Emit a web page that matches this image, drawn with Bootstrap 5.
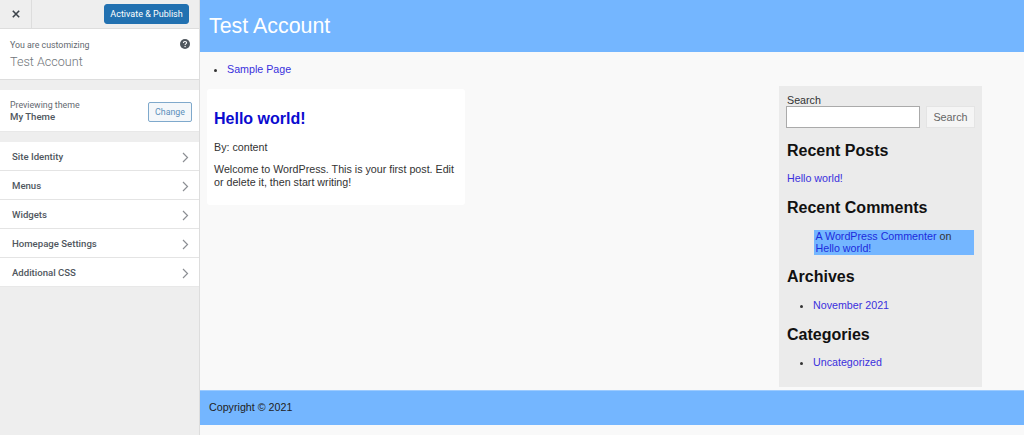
<!DOCTYPE html>
<html lang="en">
<head>
<meta charset="utf-8">
<title>Customize</title>
<link href="https://cdn.jsdelivr.net/npm/bootstrap@5.3.0/dist/css/bootstrap.min.css" rel="stylesheet">
<style>
html,body{height:100%;}
body{overflow:hidden;background:#f9f9f9;}
.shell{height:435px;}
.ctl{width:200px;flex:none;background:#eee;border-right:1px solid #ddd;font-family:"Roboto","Open Sans",sans-serif;color:#50575e;}
.ctl-top{height:29px;border-bottom:1px solid #ddd;}
.ctl-close{width:32px;border-right:1px solid #ddd;}
.ctl-pub{background:#2271b1;border:1px solid #2271b1;color:#fff;font-size:9px;line-height:18px;padding:0;width:85px;border-radius:3px;height:20px;margin:4px 10px 0 0;white-space:nowrap;}
.ctl-info{height:51px;background:#fff;border-bottom:1px solid #ddd;padding:10px 9px 0 10px;}
.ctl-small{font-size:8.8px;line-height:12px;color:#646970;}
.ctl-title{font-size:12.6px;line-height:20px;color:#70757a;font-weight:300;margin-top:1px;}
.ctl-theme{height:42px;margin-top:10px;background:#fff;border-bottom:1px solid #e8e8e8;padding:9px 7px 0 10px;}
.ctl-name{font-size:9.6px;line-height:12px;font-weight:500;color:#50575e;}
.ctl-change{height:20px;width:44px;margin-top:3px;padding:0;font-size:8.8px;line-height:18px;color:#5b8fba;background:#f4f7fa;border:1px solid #7fa9cc;border-radius:2px;}
.ctl-list{margin-top:10px;background:#fff;border-bottom:1px solid #e8e8e8;}
.ctl-row{height:29px;padding:2px 10px 0 12px;border-bottom:1px solid #e4e4e4;font-size:9.6px;font-weight:500;color:#50575e;}
.ctl-row:last-child{border-bottom:0;height:28px;}
.site{font-family:"Liberation Sans",Arial,sans-serif;font-size:10.7px;line-height:12.6px;color:#333;min-width:0;background:#f9f9f9;}
.site a{color:#3a30dd;text-decoration:none;}
.site-head{height:52px;background:#74b6ff;color:#fff;padding-left:9px;font-size:21.4px;}
.site-nav{margin:0;padding:11px 0 0 27px;height:34px;}
.site-main{height:304px;}
.post{width:258px;height:116px;margin:3px 0 0 7px;background:#fff;padding:0 7px;border-radius:3px;}
.post-title{font-size:16px;line-height:20px;font-weight:700;margin:20px 0 12px;}
.post-title a{color:#0b0bd0;}
.post p{margin:0 0 9.8px;}
.side{width:203px;height:301px;margin-right:42px;background:#ebebeb;padding:8px 8px 0 8px;}
.side-label{line-height:12px;display:block;color:#333;}
.side-input{width:134px;height:22px;margin-left:-1px;border:1px solid #aaa;background:#fff;}
.side-btn{width:49px;height:22px;padding:0;margin-right:-1px;border:1px solid #e4e4e4;background:#f5f5f5;color:#666;font-size:10.8px;}
.side-h{font-size:16px;line-height:20px;font-weight:700;color:#111;margin:13px 0 11px;}
.side-h-c{margin-bottom:12px;}
.side-h-a{margin:12px 0 12px;}
.side-h-k{margin-top:14px;}
.side ul{margin:0;padding-left:26px;}
.c-box{background:#74b6ff;margin:0 0 0 26.5px;padding:0 2px;line-height:12px;height:25px;}
.c-box a{color:#1c2bdc;}
.site-foot{height:35px;background:#74b6ff;padding:0 0 2px 9px;color:#222;border-top:1px solid #9ccbff;}
.site-rest{height:10px;}
</style>
</head>
<body>
<div class="d-flex shell">
  <aside class="ctl">
    <div class="ctl-top d-flex justify-content-between">
      <div class="ctl-close d-flex align-items-center justify-content-center">
        <svg width="8" height="8" viewBox="0 0 8 8" aria-hidden="true"><path d="M.8.8l6.4 6.4M7.2.8L.8 7.2" stroke="#3c434a" stroke-width="1.6" fill="none"/></svg>
      </div>
      <button class="ctl-pub" type="button">Activate &amp; Publish</button>
    </div>
    <div class="ctl-info d-flex justify-content-between">
      <div>
        <div class="ctl-small">You are customizing</div>
        <div class="ctl-title">Test Account</div>
      </div>
      <svg width="10" height="10" viewBox="0 0 11 11" aria-hidden="true"><circle cx="5.5" cy="5.5" r="5.5" fill="#50575e"/><path d="M3.7 4.3c0-1 .8-1.6 1.8-1.6s1.8.6 1.8 1.5c0 1.2-1.7 1.2-1.7 2.3" stroke="#fff" stroke-width="1.2" fill="none"/><circle cx="5.6" cy="8.2" r=".8" fill="#fff"/></svg>
    </div>
    <div class="ctl-theme d-flex justify-content-between">
      <div>
        <div class="ctl-small">Previewing theme</div>
        <div class="ctl-name">My Theme</div>
      </div>
      <button class="ctl-change" type="button">Change</button>
    </div>
    <div class="ctl-list">
      <div class="ctl-row d-flex align-items-center justify-content-between"><span>Site Identity</span><svg width="7" height="11" viewBox="0 0 7 11" aria-hidden="true"><path d="M1 1l4.5 4.5L1 10" stroke="#8c8f94" stroke-width="1.2" fill="none"/></svg></div>
      <div class="ctl-row d-flex align-items-center justify-content-between"><span>Menus</span><svg width="7" height="11" viewBox="0 0 7 11" aria-hidden="true"><path d="M1 1l4.5 4.5L1 10" stroke="#8c8f94" stroke-width="1.2" fill="none"/></svg></div>
      <div class="ctl-row d-flex align-items-center justify-content-between"><span>Widgets</span><svg width="7" height="11" viewBox="0 0 7 11" aria-hidden="true"><path d="M1 1l4.5 4.5L1 10" stroke="#8c8f94" stroke-width="1.2" fill="none"/></svg></div>
      <div class="ctl-row d-flex align-items-center justify-content-between"><span>Homepage Settings</span><svg width="7" height="11" viewBox="0 0 7 11" aria-hidden="true"><path d="M1 1l4.5 4.5L1 10" stroke="#8c8f94" stroke-width="1.2" fill="none"/></svg></div>
      <div class="ctl-row d-flex align-items-center justify-content-between"><span>Additional CSS</span><svg width="7" height="11" viewBox="0 0 7 11" aria-hidden="true"><path d="M1 1l4.5 4.5L1 10" stroke="#8c8f94" stroke-width="1.2" fill="none"/></svg></div>
    </div>
  </aside>
  <main class="site flex-grow-1">
    <div class="site-head d-flex align-items-center">Test Account</div>
    <ul class="site-nav"><li><a href="#">Sample Page</a></li></ul>
    <div class="site-main d-flex justify-content-between align-items-start">
      <article class="post">
        <h2 class="post-title"><a href="#">Hello world!</a></h2>
        <p>By: content</p>
        <p>Welcome to WordPress. This is your first post. Edit or delete it, then start writing!</p>
      </article>
      <aside class="side">
        <label class="side-label">Search</label>
        <div class="d-flex justify-content-between">
          <input class="side-input" type="text" aria-label="Search">
          <button class="side-btn" type="button">Search</button>
        </div>
        <h3 class="side-h">Recent Posts</h3>
        <div><a href="#">Hello world!</a></div>
        <h3 class="side-h side-h-c">Recent Comments</h3>
        <div class="c-box"><a href="#">A WordPress Commenter</a> on <a href="#">Hello world!</a></div>
        <h3 class="side-h side-h-a">Archives</h3>
        <ul><li><a href="#">November 2021</a></li></ul>
        <h3 class="side-h side-h-k">Categories</h3>
        <ul><li><a href="#">Uncategorized</a></li></ul>
      </aside>
    </div>
    <footer class="site-foot d-flex align-items-center">Copyright © 2021</footer>
    <div class="site-rest"></div>
  </main>
</div>
<script src="https://cdn.jsdelivr.net/npm/bootstrap@5.3.0/dist/js/bootstrap.bundle.min.js"></script>
</body>
</html>
